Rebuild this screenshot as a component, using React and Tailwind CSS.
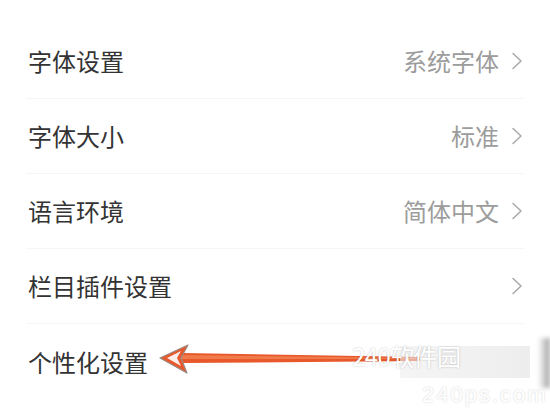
import React from 'react';

const rows = [
    { label: '字体设置', value: '系统字体' },
    { label: '字体大小', value: '标准' },
    { label: '语言环境', value: '简体中文' },
    { label: '栏目插件设置', value: '' },
    { label: '个性化设置', value: null },
];

const Chevron = () => (
    <svg width="12" height="18" viewBox="0 0 12 18" className="shrink-0">
        <path d="M2 1.5 L10 9 L2 16.5" fill="none" stroke="#a8a8a8" strokeWidth="1.5" strokeLinecap="round" strokeLinejoin="round" />
    </svg>
);

const App = () => {
    return (
        <div
            className="relative w-[550px] h-[412px] bg-white overflow-hidden pt-[24px]"
            style={{ fontFamily: '"Noto Sans CJK SC", "Noto Sans", sans-serif' }}
        >
            {rows.map((row, i) => (
                <div
                    key={row.label}
                    className={`mx-[26px] h-[75px] flex items-center justify-between ${i < rows.length - 1 ? 'border-b border-[#f6f6f6]' : ''}`}
                >
                    <span className="pl-[2px] text-[24px] leading-none text-[#333333]">{row.label}</span>
                    {row.value !== null && (
                        <div className="flex items-center gap-[12px] pr-[1px]">
                            {row.value && <span className="text-[24px] leading-none text-[#9c9c9c]">{row.value}</span>}
                            <Chevron />
                        </div>
                    )}
                </div>
            ))}

            {/* Annotation arrow */}
            <svg className="absolute left-0 top-0 pointer-events-none" width="550" height="412" viewBox="0 0 550 412">
                <path d="M182 353 L420 357 L420 361 L182 363 Z" fill="#e8582b" />
                <path d="M182 355 L420 358 L420 359 L182 359 Z" fill="#f07a4a" />
                <path d="M160 358 L188 345 L181 358 L187 373 Z" fill="#e8582b" stroke="#9a8a80" strokeWidth="1.2" strokeLinejoin="round" />
                <path d="M167 358 L181 351 L177 358 L181 366 Z" fill="#ffffff" opacity="0.9" />
            </svg>

            {/* Watermark */}
            <div className="absolute left-[400px] top-[346px] w-[130px] h-[32px] bg-gradient-to-r from-[#eeeeee]/60 to-[#dcdcdc]/50" />
            <div className="absolute right-0 top-[338px] w-[12px] h-[50px] bg-gradient-to-r from-[#ffffff] to-[#a0a0a0] blur-[2px]" />
            <div className="absolute left-[352px] top-[344px] text-[24px] leading-none text-white tracking-tight [text-shadow:0_0_2px_rgba(0,0,0,0.25)]">
                240软件园
            </div>
            <div
                className="absolute left-[422px] top-[384px] text-[22px] leading-none text-white tracking-[2px] [text-shadow:0_0_2px_rgba(0,0,0,0.2)]"
                style={{ fontFamily: '"Liberation Sans", sans-serif' }}
            >
                240ps.com
            </div>
        </div>
    );
};

export default App;
